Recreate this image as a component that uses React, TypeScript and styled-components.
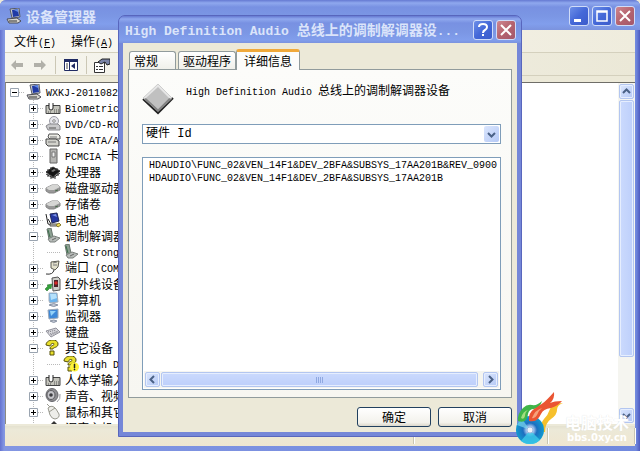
import React from 'react';
import styled, { createGlobalStyle, css } from 'styled-components';

const Global = createGlobalStyle`
  *, *::before, *::after { box-sizing: border-box; }
  body {
    margin: 0;
    background: #ece9d8;
    color: #000;
    font: 12px/16px "Noto Sans CJK SC", sans-serif;
    overflow: hidden;
  }
  button, select, input { font: inherit; color: inherit; margin: 0; padding: 0; }
`;

/* ---------- text ---------- */

const Latin = styled.span<{ $big?: boolean }>`
  font-family: "Liberation Mono", monospace;
  font-size: ${(p) => (p.$big ? 13 : 10)}px;
  white-space: pre;
`;

function Mixed({ children, big }: { children: string; big?: boolean }) {
  const runs = children.match(/[\x00-\x7f]+|[^\x00-\x7f]+/g) || [];
  return (
    <>
      {runs.map((r, i) =>
        r.charCodeAt(0) < 128 ? <Latin key={i} $big={big}>{r}</Latin> : <span key={i}>{r}</span>
      )}
    </>
  );
}

/* ---------- main window ---------- */

const Window = styled.main`
  position: relative;
  display: flex;
  flex-direction: column;
  height: 100vh;
  padding: 0 5px 5px;
  border-radius: 6px 6px 0 0;
  overflow: hidden;
  background: linear-gradient(90deg, #6472d0, #8396e2 4px, #7189de calc(100% - 4px), #4e5bc0);
`;

const TitleBar = styled.header<{ $dialog?: boolean }>`
  display: flex;
  flex: none;
  align-items: center;
  height: ${(p) => (p.$dialog ? 27 : 30)}px;
  margin: 0 ${(p) => (p.$dialog ? -4 : -5)}px;
  padding: ${(p) => (p.$dialog ? '1px 5px 0 6px' : '2px 5px 0 6px')};
  gap: 4px;
  background: linear-gradient(#6579d2, #8fa8ee 3px, #7891e2 7px, #7b96e4 16px, #819eec 24px, #7b93de);
`;

const Title = styled.h1`
  flex: 1;
  min-width: 0;
  margin: 0;
  font-size: 14px;
  line-height: 20px;
  font-weight: 700;
  color: #dbe4fa;
  white-space: nowrap;
  overflow: hidden;
`;

const CaptionButtons = styled.div`
  display: flex;
  gap: 3px;
`;

const CaptionButton = styled.button<{ $close?: boolean }>`
  display: grid;
  place-items: center;
  width: 20px;
  height: 20px;
  border: 1px solid #d0dcf8;
  border-radius: 3px;
  background: ${(p) =>
    p.$close
      ? 'linear-gradient(135deg, #cf8790, #b5636f 50%, #a3586c)'
      : 'linear-gradient(135deg, #6d8fe8, #4468d8 50%, #3c5ccb)'};
`;

const Client = styled.div`
  display: flex;
  flex: 1;
  flex-direction: column;
  min-height: 0;
  background: #ece9d8;
`;

const MenuBar = styled.nav`
  display: flex;
  flex: none;
  height: 23px;
  padding: 1px 9px 0;
  gap: 15px;
  background: linear-gradient(90deg, #f9f8f4, #efecdd);
  border-bottom: 1px solid #d4d0bd;
`;

const MenuItem = styled.button`
  border: 0;
  background: none;
  line-height: 20px;
  white-space: nowrap;
`;

const ToolBar = styled.div`
  display: flex;
  flex: none;
  align-items: center;
  height: 23px;
  padding: 2px 0 0 4px;
  gap: 7px;
  background: linear-gradient(90deg, #f6f5ee, #ebe8d7);
  border-bottom: 1px solid #d4d0bd;
`;

const ToolButton = styled.button`
  display: grid;
  place-items: center;
  width: 16px;
  height: 20px;
  border: 0;
  background: none;
`;

const ToolRule = styled.span`
  width: 1px;
  height: 18px;
  background: #cbc7b5;
`;

const Content = styled.section`
  display: flex;
  flex: 1;
  min-height: 0;
  margin-top: 6px;
  border-top: 1px solid #6f6e68;
  border-left: 1px solid #8d8b80;
  background: #fff;
`;

const Tree = styled.ul`
  flex: 1;
  margin: 0;
  padding: 1px 0 0 2px;
  overflow: hidden;
  list-style: none;
`;

const TreeRow = styled.li<{ $level: number }>`
  display: flex;
  align-items: center;
  height: 16px;
  padding-left: ${(p) => [0, 19, 37][p.$level]}px;
  white-space: nowrap;
  ${(p) =>
    p.$level > 0 &&
    css`
      background: repeating-linear-gradient(#b9b9b9 0 1px, #fff 1px 2px) 25px 0 / 1px 100% no-repeat;
    `}
`;

const Joint = styled.span<{ $blank?: boolean }>`
  display: flex;
  flex: none;
  align-items: center;
  width: 16px;
  height: 16px;
  padding-left: 2px;
  svg { display: ${(p) => (p.$blank ? 'none' : 'block')}; }
  &::after {
    content: '';
    flex: 1;
    height: 1px;
    background: repeating-linear-gradient(90deg, #b9b9b9 0 1px, #fff 1px 2px);
  }
`;

const RowIcon = styled.span`
  flex: none;
  width: 16px;
  height: 16px;
  margin: 0 4px 0 2px;
  svg { display: block; }
`;

const StatusBar = styled.footer`
  display: flex;
  flex: none;
  height: 20px;
  margin-top: 2px;
  background: linear-gradient(#e4e1cf, #ece9d8 4px, #efe6d0);
`;

const StatusCell = styled.span<{ $grow: number }>`
  flex: ${(p) => p.$grow} 0 0;
  margin: 2px 0;
  border-right: 1px solid #c9c5b2;
  box-shadow: 1px 0 #fff;
`;

/* ---------- scroll bars ---------- */

const ScrollBar = styled.div<{ $horizontal?: boolean }>`
  display: flex;
  flex: none;
  flex-direction: ${(p) => (p.$horizontal ? 'row' : 'column')};
  gap: 1px;
  padding: 1px;
  background: #f5f5f0;
  ${(p) => (p.$horizontal ? 'height: 17px;' : 'width: 17px;')}
`;

const thumbBlue = css`
  border: 1px solid #b3c6f0;
  border-radius: 2px;
  box-shadow: inset 0 0 0 1px #e6eefe;
`;

const ScrollButton = styled.button`
  display: grid;
  flex: none;
  place-items: center;
  width: 15px;
  height: 15px;
  background: linear-gradient(135deg, #dbe6fd, #b5c9f6);
  ${thumbBlue}
`;

const Thumb = styled.div<{ $length: number; $horizontal?: boolean }>`
  display: grid;
  place-items: center;
  flex: ${(p) => p.$length} 0 0;
  background: linear-gradient(${(p) => (p.$horizontal ? '180deg' : '90deg')}, #cbdafd, #bdcffb);
  ${thumbBlue}
`;

const Track = styled.div<{ $length: number }>`
  flex: ${(p) => p.$length} 0 0;
`;

/* ---------- dialog ---------- */

const Dialog = styled.section`
  position: absolute;
  top: 15px;
  left: 118px;
  display: flex;
  flex-direction: column;
  width: 404px;
  height: 422px;
  padding: 0 4px 4px;
  border: 1px solid #5866bd;
  border-radius: 7px 7px 0 0;
  overflow: hidden;
  background: #7587d8;
`;

const DialogBody = styled.div`
  display: flex;
  flex: 1;
  flex-direction: column;
  min-height: 0;
  padding: 6px 5px 5px;
  background: #ece9d8;
`;

const Tabs = styled.div`
  display: flex;
  flex: none;
  align-items: flex-end;
  height: 20px;
  padding-left: 1px;
`;

const Tab = styled.button<{ $active?: boolean }>`
  height: 18px;
  padding: 0 ${(p) => (p.$active ? 7 : 4)}px;
  min-width: 47px;
  margin-right: 2px;
  border: 1px solid #919b9c;
  border-bottom: 0;
  border-radius: 3px 3px 0 0;
  background: linear-gradient(#fff, #f0f0ea);
  line-height: 16px;
  text-align: left;
  white-space: nowrap;
  ${(p) =>
    p.$active &&
    css`
      position: relative;
      height: 21px;
      margin: 0 0 -1px -2px;
      border-top: 3px solid #f0a93a;
      background: #fcfcfa;
      z-index: 1;
    `}
`;

const Panel = styled.div`
  display: flex;
  flex: 1;
  flex-direction: column;
  min-height: 0;
  padding: 13px 10px 7px 13px;
  border: 1px solid #919b9c;
  background: linear-gradient(#fcfcfa, #f7f6f1);
`;

const Device = styled.div`
  display: flex;
  flex: none;
  gap: 12px;
  height: 41px;
  p { margin: 0; line-height: 13px; white-space: nowrap; }
`;

const SelectWrap = styled.div`
  position: relative;
  display: flex;
  flex: none;
  height: 20px;
  border: 1px solid #7f9db9;
  background: #fff;
`;

const Select = styled.select`
  flex: 1;
  padding: 0 0 0 3px;
  border: 0;
  appearance: none;
  background: none;
  font-family: "Liberation Mono", "Noto Sans CJK SC", monospace;
  line-height: 16px;
`;

const SelectArrow = styled.span`
  display: grid;
  place-items: center;
  width: 15px;
  margin: 1px;
  background: linear-gradient(135deg, #dbe6fd, #b5c9f6);
  border-radius: 2px;
  pointer-events: none;
`;

const ListBox = styled.div`
  display: flex;
  flex: 1;
  flex-direction: column;
  min-height: 0;
  margin-top: 13px;
  padding: 1px;
  border: 1px solid #7f9db9;
  background: #fff;
`;

const Values = styled.ul`
  flex: 1;
  margin: 0;
  padding: 0 0 0 5px;
  list-style: none;
  font: 10px/13px "Liberation Mono", monospace;
  white-space: nowrap;
  overflow: hidden;
`;

const Actions = styled.div`
  display: flex;
  flex: none;
  justify-content: flex-end;
  gap: 7px;
  padding-top: 9px;
`;

const PushButton = styled.button`
  width: 74px;
  height: 20px;
  border: 1px solid #21405f;
  border-radius: 3px;
  background: linear-gradient(#fff, #f3f2ec 80%, #dcd7cb);
  line-height: 16px;
`;

/* ---------- watermark ---------- */

const Watermark = styled.div`
  position: absolute;
  right: 6px;
  bottom: 7px;
  display: flex;
  align-items: flex-end;
  gap: 6px;
  width: 118px;
  svg { flex: none; margin-right: -10px; }
`;

const WatermarkText = styled.p`
  flex: 1;
  margin: 0;
  color: #fff;
  font: 700 10px/13px "DejaVu Sans", sans-serif;
  text-align: center;
  white-space: nowrap;
  strong { display: block; font: 700 16px/18px "Noto Sans CJK SC", sans-serif; text-shadow: 0 0 1px #ddd; }
`;

/* ---------- drawings ---------- */

const Icon = ({ kind }: { kind: string }) => (
  <svg width="16" height="16" viewBox="0 0 16 16" aria-hidden="true">
    {shapes[kind]}
  </svg>
);

const question = (
  <>
    <path d="M1 5c0-6 12-7 12-1 0 4-5 3-5 5H5c0-4 4-3 4-5 0-1-3-1-4 2z" fill="#e9e02c" stroke="#55500c" />
    <path d="M5 11h4v4H5z" fill="#e9e02c" stroke="#55500c" />
  </>
);

const shapes: Record<string, React.ReactNode> = {
  computer: (
    <>
      <path d="M4 1l9-1 1 9-8 1z" fill="#c9ccd2" stroke="#565a66" />
      <path d="M6 2l6-1 1 7-6 1z" fill="#203aa5" />
      <path d="M8 2l4-1v3z" fill="#5e8aea" />
      <path d="M1 11l10-1 4 3-3 2H3z" fill="#d6d5cf" stroke="#4c4c55" />
      <path d="M3 13h8" stroke="#333" />
    </>
  ),
  hid: (
    <>
      <path d="M1 5.500h14v8H1z" fill="#c4c4bc" stroke="#444" />
      <path d="M4 3v5q0 2 2 2t2-2V3" fill="#fff" stroke="#222" />
      <path d="M9 10h5M9 12h5M3 12h4" stroke="#555" strokeDasharray="1 1" />
    </>
  ),
  dvd: (
    <>
      <circle cx="9" cy="5" r="4.500" fill="#e6e6ec" stroke="#9b9ba6" />
      <circle cx="9" cy="5" r="1.300" fill="#fff" stroke="#888" />
      <path d="M1 10l3-2h9l2 2v4H3z" fill="#c9c9cb" stroke="#88888c" />
      <path d="M4 12h7" stroke="#555" />
    </>
  ),
  ide: (
    <>
      <path d="M4 2h9l2 2v3H5L3 5z" fill="#ecece6" stroke="#555" />
      <path d="M1 7h10l3 2v5H3l-2-2z" fill="#d2d2cc" stroke="#444" />
      <path d="M3 10h8M5 5h7" stroke="#777" />
    </>
  ),
  card: (
    <>
      <path d="M5 1h7v14H5z" fill="#b4b4b2" stroke="#666" />
      <path d="M7 4h3v5H7z" fill="#eee" stroke="#777" />
    </>
  ),
  cpu: (
    <>
      <path d="M1 8l7-5 7 4-7 6z" fill="#151515" stroke="#333" />
      <path d="M1 10l7 4 7-5M3 5v3M6 3v3M12 4v3M3 10v3M6 12v3M10 12v3M13 9v3" stroke="#333" fill="none" />
      <path d="M6 7l3-2 2 1-3 2z" fill="#777" />
    </>
  ),
  disk: (
    <>
      <path d="M1 8l6-3h6l2 2v3l-6 3H4l-3-2z" fill="#989898" stroke="#858585" />
      <path d="M1 8l6-3h6l2 2-6 3H4z" fill="#d6d6d4" />
      <path d="M10 11l3-1" stroke="#4b6b4b" />
    </>
  ),
  battery: (
    <>
      <path d="M5 2l7-1 2 8-7 2z" fill="#2537a1" stroke="#202858" />
      <path d="M7 3l4-1 1 3z" fill="#7c93e5" />
      <path d="M1 2l2 10 5 1M3 7l3 5" stroke="#222" fill="none" />
      <path d="M5 12h8v2H5z" fill="#c8c8c2" stroke="#555" />
      <path d="M11 13l3-2 2 2-3 2z" fill="#eedb58" stroke="#87792a" />
    </>
  ),
  modem: (
    <>
      <path d="M2 1l4-1 2 9-4 2z" fill="#8da093" stroke="#66746b" />
      <path d="M3 11l6-3 6 2-5 4H5z" fill="#b6bbb8" stroke="#7c817e" />
      <path d="M3 2l2 7" stroke="#3c6f4b" />
      <path d="M7 12l4-2" stroke="#666" />
    </>
  ),
  port: (
    <>
      <path d="M6 2l8-1-1 6-3 3-4-2z" fill="#e3e1cc" stroke="#5c5b50" />
      <path d="M8 3l4-1M8 5h4" stroke="#777" />
      <path d="M9 10q-1 5-8 4" stroke="#333" fill="none" />
    </>
  ),
  infrared: (
    <>
      <path d="M7 2l6-1 2 2v11l-7 1z" fill="#cfcfca" stroke="#555" />
      <path d="M9 4h4v7H9z" fill="#4d2429" />
      <circle cx="11" cy="7" r="1.700" fill="#d52929" />
      <path d="M0 13l3-3-1-1 5-1-1 5-1-1-3 3z" fill="#34a13a" stroke="#236b27" strokeWidth=".5" />
    </>
  ),
  desktop: (
    <>
      <path d="M4 1l8 0 1 9-8 1-1-2z" fill="#69b3ee" stroke="#a5adb8" />
      <path d="M5 2l6 0 1 4-6 2z" fill="#b4e0fb" />
      <path d="M4 13q5-3 9 0-4 3-9 0z" fill="#c3c9d6" stroke="#8994a7" />
    </>
  ),
  monitor: (
    <>
      <path d="M3 2l10-1v9l-9 1z" fill="#3d88d8" stroke="#9ca8b7" />
      <path d="M5 3h6L6 8z" fill="#94d2f8" />
      <path d="M5 13q4-2 7 0-3 3-7 0z" fill="#c3c9d6" stroke="#8b94a4" />
    </>
  ),
  keyboard: (
    <>
      <path d="M1 7l10-3 4 4-9 5z" fill="#d9d9de" stroke="#91919b" />
      <path d="M3 8l8-2M5 10l8-3M6 11l7-3" stroke="#74747d" strokeDasharray="1 1" />
    </>
  ),
  unknown: question,
  unknownWarn: (
    <>
      {question}
      <circle cx="11.500" cy="11" r="4.500" fill="#fff33b" />
      <path d="M11 8h1v4h-1zM11 13h1v1h-1z" fill="#222" stroke="#222" strokeWidth=".5" />
    </>
  ),
  sound: (
    <>
      <ellipse cx="7" cy="7" rx="6" ry="6.500" fill="#8d8d91" stroke="#66666b" />
      <ellipse cx="6" cy="7" rx="4" ry="4.500" fill="#c5c5ca" stroke="#5c5c60" />
      <circle cx="6" cy="7" r="1.800" fill="#3c3c40" />
      <path d="M12 14q4-3 3-8" stroke="#99999f" fill="none" />
    </>
  ),
  mouse: (
    <>
      <path d="M3 4q4-4 8 1l3 5q1 4-4 5-3 0-5-4z" fill="#eeeeea" stroke="#99998f" />
      <path d="M4 8l6-4M5 3L2 0" stroke="#99998f" fill="none" />
    </>
  ),
  network: <path d="M6 4l3-3 3 3v9H6z" fill="#333" />,
};

const Expander = ({ open }: { open?: boolean }) => (
  <svg width="9" height="9" aria-hidden="true">
    <path d="M.5.5h8v8h-8z" fill="#fff" stroke="#9aa4b0" />
    <path d={open ? 'M2 4.500h5' : 'M2 4.500h5M4.500 2v5'} stroke="#000" />
  </svg>
);

const Chevron = ({ turn = 0 }: { turn?: number }) => (
  <svg width="9" height="9" viewBox="0 0 9 9" aria-hidden="true">
    <path d="M1 3l3.500 3.500L8 3" fill="none" stroke="#4a6186" strokeWidth="2" transform={`rotate(${turn} 4.500 4.500)`} />
  </svg>
);

const Cross = () => (
  <svg width="14" height="14" aria-hidden="true">
    <path d="M2 2l10 10M12 2L2 12" stroke="#fff" strokeWidth="2" />
  </svg>
);

const Arrow = ({ back }: { back?: boolean }) => (
  <svg width="14" height="12" aria-hidden="true">
    <path d={back ? 'M1 6l5-5v3h7v4H6v3z' : 'M13 6L8 1v3H1v4h7v3z'} fill="#b1b0a9" />
  </svg>
);

/* ---------- page ---------- */

type Row = [level: number, kind: string, label: string, state: 'open' | 'closed' | 'leaf'];

const rows: Row[] = [
  [0, 'computer', 'WXKJ-20110827', 'open'],
  [1, 'hid', 'Biometric', 'closed'],
  [1, 'dvd', 'DVD/CD-ROM', 'closed'],
  [1, 'ide', 'IDE ATA/ATAPI', 'closed'],
  [1, 'card', 'PCMCIA 卡', 'closed'],
  [1, 'cpu', '处理器', 'closed'],
  [1, 'disk', '磁盘驱动器', 'closed'],
  [1, 'disk', '存储卷', 'closed'],
  [1, 'battery', '电池', 'closed'],
  [1, 'modem', '调制解调器', 'open'],
  [2, 'modem', 'StrongModem', 'leaf'],
  [1, 'port', '端口 (COM)', 'closed'],
  [1, 'infrared', '红外线设备', 'closed'],
  [1, 'desktop', '计算机', 'closed'],
  [1, 'monitor', '监视器', 'closed'],
  [1, 'keyboard', '键盘', 'closed'],
  [1, 'unknown', '其它设备', 'open'],
  [2, 'unknownWarn', 'High Definition', 'leaf'],
  [1, 'hid', '人体学输入', 'closed'],
  [1, 'sound', '声音、视频', 'closed'],
  [1, 'mouse', '鼠标和其它', 'closed'],
  [1, 'network', '调度主机', 'closed'],
];

const hardwareIds = [
  'HDAUDIO\\FUNC_02&VEN_14F1&DEV_2BFA&SUBSYS_17AA201B&REV_0900',
  'HDAUDIO\\FUNC_02&VEN_14F1&DEV_2BFA&SUBSYS_17AA201B',
];

export default function App() {
  return (
    <>
      <Global />
      <Window>
        <TitleBar>
          <Icon kind="computer" />
          <Title>设备管理器</Title>
          <CaptionButtons>
            <CaptionButton aria-label="最小化">
              <svg width="14" height="14"><path d="M2 10h7v3H2z" fill="#fff" /></svg>
            </CaptionButton>
            <CaptionButton aria-label="最大化">
              <svg width="14" height="14"><path d="M2 2h10v10H2zM2 3h10" fill="none" stroke="#fff" strokeWidth="1.500" /></svg>
            </CaptionButton>
            <CaptionButton $close aria-label="关闭"><Cross /></CaptionButton>
          </CaptionButtons>
        </TitleBar>
        <Client>
          <MenuBar>
            <MenuItem>文件<Latin>(<u>F</u>)</Latin></MenuItem>
            <MenuItem>操作<Latin>(<u>A</u>)</Latin></MenuItem>
          </MenuBar>
          <ToolBar>
            <ToolButton aria-label="后退"><Arrow back /></ToolButton>
            <ToolButton aria-label="前进"><Arrow /></ToolButton>
            <ToolRule />
            <ToolButton aria-label="显示树">
              <svg width="14" height="12">
                <path d="M.5.5h13v11H.5z" fill="#fff" stroke="#1f2a63" />
                <path d="M0 0h14v3H0z" fill="#1f2a63" />
                <path d="M5.500 2v10" stroke="#1f2a63" />
                <path d="M2 5h2M2 7h2M2 9h2" stroke="#444" />
                <path d="M11 4v6L7 7z" fill="#1f2a63" />
              </svg>
            </ToolButton>
            <ToolRule />
            <ToolButton aria-label="属性">
              <svg width="16" height="15">
                <path d="M.5 4.500h10v10H.5z" fill="#fff" stroke="#333" />
                <path d="M2 8.500h2M5 8.500h4M2 11.500h2M5 11.500h4" stroke="#333" />
                <path d="M4 4l4-3h8v5l-3 1-2-3-4 2z" fill="#7983a5" stroke="#222" />
              </svg>
            </ToolButton>
          </ToolBar>
          <Content>
            <Tree>
              {rows.map(([level, kind, label, state]) => (
                <TreeRow key={label} $level={level}>
                  <Joint $blank={state === 'leaf'}><Expander open={state === 'open'} /></Joint>
                  <RowIcon><Icon kind={kind} /></RowIcon>
                  <span><Mixed>{label}</Mixed></span>
                </TreeRow>
              ))}
            </Tree>
            <ScrollBar>
              <ScrollButton aria-label="向上"><Chevron turn={180} /></ScrollButton>
              <Thumb $length={255} />
              <Track $length={49} />
              <ScrollButton aria-label="向下"><Chevron /></ScrollButton>
            </ScrollBar>
          </Content>
          <StatusBar>
            <StatusCell $grow={409} />
            <StatusCell $grow={134} />
            <StatusCell $grow={86} />
          </StatusBar>
        </Client>

        <Dialog role="dialog" aria-labelledby="dialog-title">
          <TitleBar $dialog>
            <Title id="dialog-title" as="h2"><Mixed big>High Definition Audio 总线上的调制解调器设...</Mixed></Title>
            <CaptionButtons>
              <CaptionButton aria-label="帮助">
                <svg width="14" height="16">
                  <path d="M3 5q0-3 4-3t4 3q0 2-2 3T7 11" fill="none" stroke="#fff" strokeWidth="2" />
                  <path d="M6 12h2v2H6z" fill="#fff" />
                </svg>
              </CaptionButton>
              <CaptionButton $close aria-label="关闭"><Cross /></CaptionButton>
            </CaptionButtons>
          </TitleBar>
          <DialogBody>
            <Tabs role="tablist">
              <Tab role="tab">常规</Tab>
              <Tab role="tab">驱动程序</Tab>
              <Tab role="tab" $active aria-selected>详细信息</Tab>
            </Tabs>
            <Panel role="tabpanel">
              <Device>
                <svg width="32" height="32" aria-hidden="true">
                  <path d="M1 16L16 30 31 15" fill="none" stroke="#222" strokeWidth="2" />
                  <path d="M1 15L16 1l14 14-14 13z" fill="#e6e6e6" stroke="#aaa" strokeWidth=".5" />
                  <path d="M4 15L16 4l11 11-11 11z" fill="#c0c0c0" />
                  <path d="M2 16l14 13 14-13-3-1-11 11L4 15z" fill="#858585" />
                </svg>
                <p><Mixed>High Definition Audio 总线上的调制解调器设备</Mixed></p>
              </Device>
              <SelectWrap>
                <Select aria-label="属性"><option>硬件 Id</option></Select>
                <SelectArrow><Chevron /></SelectArrow>
              </SelectWrap>
              <ListBox>
                <Values>
                  {hardwareIds.map((id) => <li key={id}>{id}</li>)}
                </Values>
                <ScrollBar $horizontal>
                  <ScrollButton aria-label="向左"><Chevron turn={90} /></ScrollButton>
                  <Thumb $horizontal $length={318}>
                    <svg width="8" height="6"><path d="M.5 0v6M2.500 0v6M4.500 0v6M6.500 0v6" stroke="#8fa8e0" /></svg>
                  </Thumb>
                  <Track $length={3} />
                  <ScrollButton aria-label="向右"><Chevron turn={270} /></ScrollButton>
                </ScrollBar>
              </ListBox>
            </Panel>
            <Actions>
              <PushButton>确定</PushButton>
              <PushButton>取消</PushButton>
            </Actions>
          </DialogBody>
        </Dialog>

        <Watermark>
          <svg width="48" height="52" viewBox="0 0 48 52" aria-hidden="true">
            <defs>
              <radialGradient id="disc">
                <stop offset="0" stopColor="#fff" />
                <stop offset=".3" stopColor="#8fb6e6" />
                <stop offset=".5" stopColor="#1c6fc0" />
                <stop offset="1" stopColor="#129bd0" />
              </radialGradient>
            </defs>
            <path d="M25 40q-1-9 3-13t6-10 13-6q-6 2-6 7t-6 9-6 13z" fill="#f6c02c" />
            <circle cx="14" cy="38" r="14" fill="url(#disc)" />
            <path d="M14 38L5 49A14 14 0 0 0 24 48z" fill="#3ccbe8" opacity=".8" />
            <path d="M14 38L1 33A14 14 0 0 1 6 27z" fill="#7cd5ee" opacity=".7" />
            <circle cx="14" cy="38" r="3" fill="#eef3fa" stroke="#9bb8e0" />
            <path d="M2 29q-1-7 5-13 4-4 9-3t10-4q-2 7-8 8-5 0-6 5-1 10-10 7z" fill="#3fb549" />
            <path d="M5 26q2-7 7-8-3 2-3 6-1 4-4 2z" fill="#a5dd7d" />
            <path d="M13 29q-1-8 5-12t9-6T38 0q1 7-4 11 4-2 12-2-4 5-11 7-8 1-10 6-4 9-12 7z" fill="#ea5533" />
            <path d="M16 26q3-8 10-10-4 3-5 7-2 4-5 3z" fill="#f7a27c" />
          </svg>
          <WatermarkText>
            <strong>电脑技术</strong>
            bbs.0xy.cn
          </WatermarkText>
        </Watermark>
      </Window>
    </>
  );
}
